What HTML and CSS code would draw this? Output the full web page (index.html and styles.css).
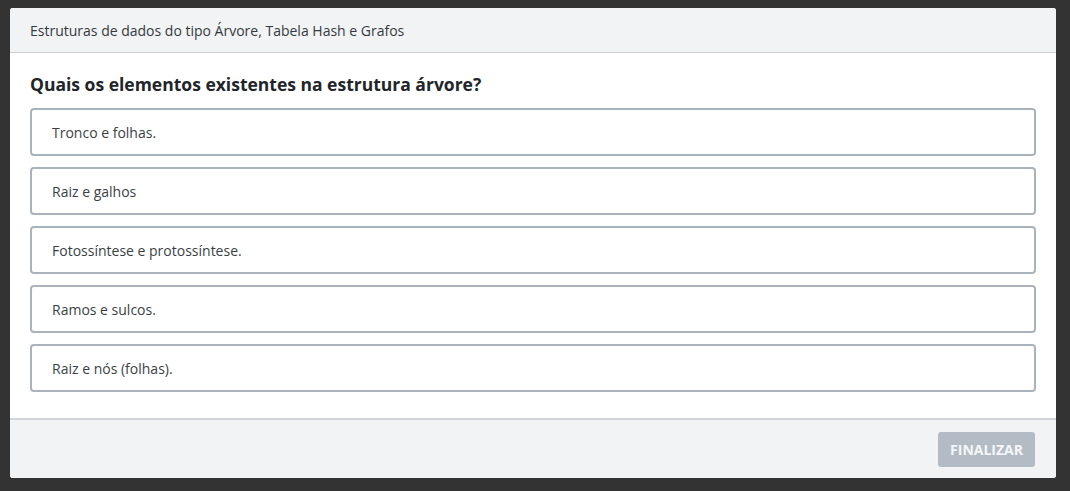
FILE: index.html
```html
<!DOCTYPE html>
<html lang="pt">
<head>
<meta charset="utf-8">
<title>Questão</title>
<link rel="stylesheet" href="styles.css">
</head>
<body>
<div class="modal">
  <div class="modal-header">Estruturas de dados do tipo Árvore, Tabela Hash e Grafos</div>
  <div class="modal-body">
    <h2 class="question">Quais os elementos existentes na estrutura árvore?</h2>
    <div class="options">
      <div class="option">Tronco e folhas.</div>
      <div class="option">Raiz e galhos</div>
      <div class="option">Fotossíntese e protossíntese.</div>
      <div class="option">Ramos e sulcos.</div>
      <div class="option">Raiz e nós (folhas).</div>
    </div>
  </div>
  <div class="modal-footer">
    <button class="btn-finish" disabled>FINALIZAR</button>
  </div>
</div>
</body>
</html>
```
FILE: styles.css
```css
html, body {
  margin: 0;
  padding: 0;
  background: #333333;
  height: 100%;
}
body {
  padding: 8px 14px 0 10px;
  box-sizing: border-box;
  font-family: "Open Sans", "Noto Sans", sans-serif;
  color: #343a40;
}
.modal {
  width: 1046px;
  background: #ffffff;
  border-radius: 3px;
  overflow: hidden;
}
.modal-header {
  height: 44px;
  background: #f2f3f5;
  border-bottom: 1px solid #cbcfd4;
  padding: 0 20px;
  display: flex;
  align-items: center;
  font-size: 14px;
  color: #343a40;
}
.modal-body {
  padding: 19px 20px 26px 20px;
}
.question {
  margin: 0 0 12px 0;
  font-size: 17.5px;
  font-weight: 700;
  line-height: 24px;
  color: #212529;
}
.options {
  display: flex;
  flex-direction: column;
  gap: 11px;
}
.option {
  height: 44px;
  border: 2px solid #aab3bb;
  border-radius: 4px;
  display: flex;
  align-items: center;
  padding: 0 20px;
  font-size: 14px;
  color: #3a3f44;
}
.modal-footer {
  border-top: 2px solid #cfd3d8;
  background: #f2f3f5;
  height: 60px;
  padding: 12px 21px 0 20px;
  display: flex;
  justify-content: flex-end;
  align-items: flex-start;
  box-sizing: border-box;
}
.btn-finish {
  height: 35px;
  padding: 0 12px;
  background: #b3bcc4;
  border: none;
  border-radius: 3px;
  color: #f5f7f9;
  font-family: "Open Sans", "Noto Sans", sans-serif;
  font-weight: 700;
  font-size: 14px;
}
```
